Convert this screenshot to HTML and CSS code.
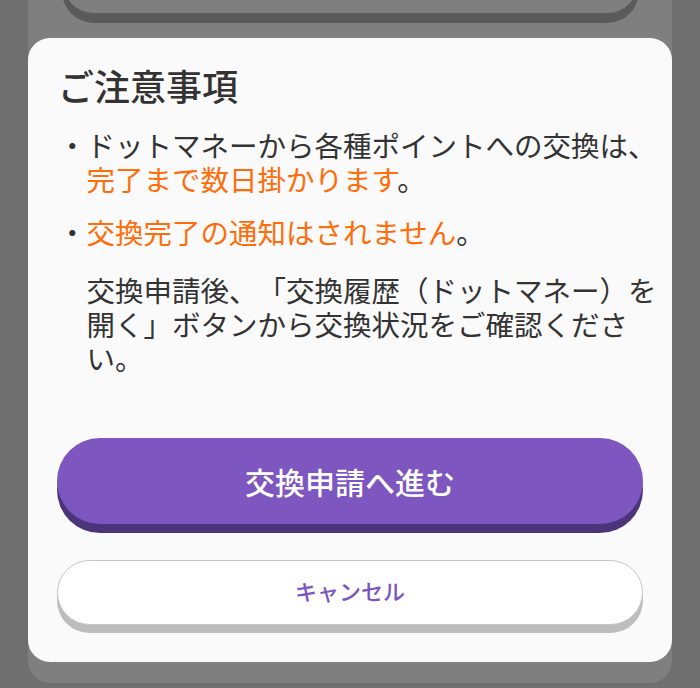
FILE: index.html
```html
<!DOCTYPE html>
<html lang="ja">

<head>
    <meta charset="utf-8">
    <title>ご注意事項</title>
    <link rel="stylesheet" href="styles.css">
</head>

<body>
    <div class="page">
        <div class="card">
            <div class="card-button"></div>
        </div>
    </div>

    <div class="overlay">
        <div class="modal">
            <h2 class="modal-title">ご注意事項</h2>
            <div class="notes">
                <ul>
                    <li>・ドットマネーから各種ポイントへの交換は、<span class="warn">完了まで数日掛かります</span>。</li>
                    <li>・<span class="warn">交換完了の通知はされません</span>。</li>
                </ul>
                <p>交換申請後、「交換履歴（ドットマネー）を開く」ボタンから交換状況をご確認ください。</p>
            </div>
            <div class="actions">
                <button class="btn btn-primary">交換申請へ進む</button>
                <button class="btn btn-cancel">キャンセル</button>
            </div>
        </div>
    </div>
</body>

</html>
```

FILE: styles.css
```css
html,
body {
    height: 100%;
    margin: 0;
    padding: 0;
}

body {
    background-color: #dfdfdf;
    font-family: "Noto Sans CJK JP", "Noto Sans", sans-serif;
    color: #333;
    overflow: hidden;
    text-spacing-trim: space-all;
}

/* page underneath the dialog */
.page {
    padding: 0 28px;
}

.card {
    box-sizing: border-box;
    margin-top: -100px;
    height: 783px;
    padding: 50px 33px 0 34px;
    background-color: #fff;
    border-radius: 22px;
}

.card-button {
    box-sizing: border-box;
    height: 64px;
    border: 1px solid #bcbcbc;
    border-radius: 32px;
    background-color: #fff;
    box-shadow: 0 9px 0 #b4b4b4;
}

/* dialog */
.overlay {
    position: fixed;
    top: 0;
    left: 0;
    right: 0;
    bottom: 0;
    display: flex;
    align-items: flex-end;
    padding: 0 28px 26px;
    background-color: rgba(0, 0, 0, 0.5);
}

.modal {
    width: 100%;
    padding: 23px 0 29px;
    background-color: #fafafa;
    border-radius: 22px;
}

.modal-title {
    margin: 0 0 19px;
    padding-left: 30px;
    font-size: 36px;
    line-height: 48px;
    font-weight: 500;
    color: #333;
}

.notes {
    padding: 0 14px 0 30px;
    font-size: 28.5px;
    line-height: 34px;
}

.notes ul {
    list-style: none;
    margin: 0;
    padding: 0;
}

.notes li {
    padding-left: 1em;
    text-indent: -1em;
}

.notes li + li {
    margin-top: 19px;
}

.notes p {
    margin: 24px 0 0;
    padding-left: 1em;
}

.warn {
    color: #ff6d0a;
}

.actions {
    display: flex;
    flex-direction: column;
    margin-top: 63px;
    padding: 0 29px;
}

.btn {
    display: block;
    width: 100%;
    padding: 0;
    font-family: inherit;
    font-weight: 500;
    cursor: pointer;
}

.btn-primary {
    height: 86px;
    margin-bottom: 36px;
    border: none;
    border-radius: 43px;
    background-color: #7d56c0;
    box-shadow: 0 9px 0 #4b3479;
    font-size: 30px;
    color: #fff;
}

.btn-cancel {
    height: 65px;
    margin-bottom: 8px;
    padding-bottom: 5px;
    border: 1px solid #c6c6c6;
    border-radius: 33px;
    background-color: #fff;
    box-shadow: 0 8px 0 #bdbdbd;
    font-size: 22px;
    color: #7b55bf;
}
```
